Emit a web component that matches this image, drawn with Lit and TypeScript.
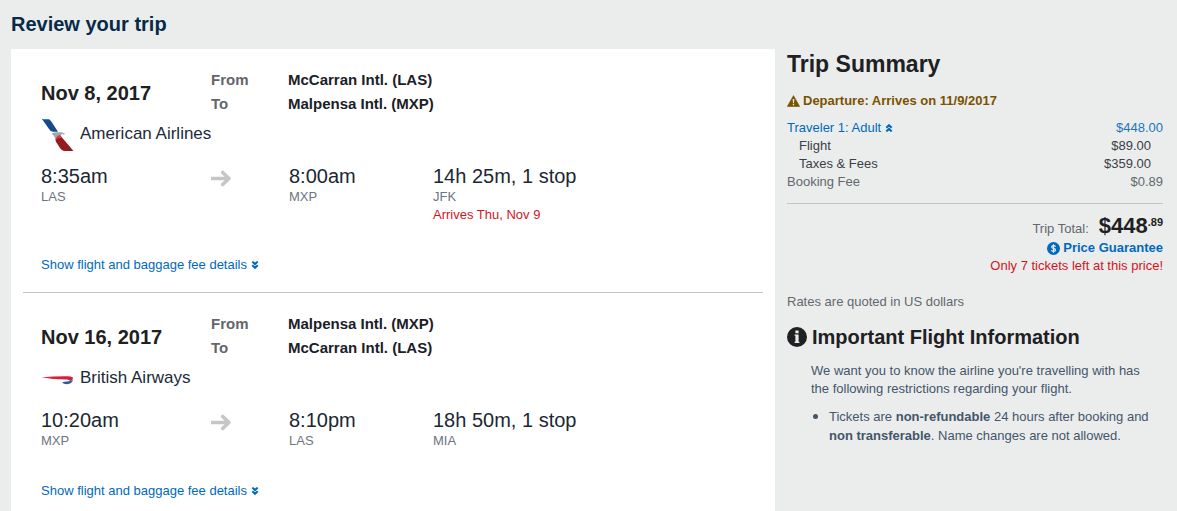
import { LitElement, html, css, svg, nothing } from "lit";
import { customElement, property } from "lit/decorators.js";

interface Leg {
  date: string;
  from: string;
  to: string;
  airline: string;
  logo: "aa" | "ba";
  depart: string;
  departCode: string;
  arrive: string;
  arriveCode: string;
  duration: string;
  via: string;
  note?: string;
}

const LEGS: Leg[] = [
  {
    date: "Nov 8, 2017",
    from: "McCarran Intl. (LAS)",
    to: "Malpensa Intl. (MXP)",
    airline: "American Airlines",
    logo: "aa",
    depart: "8:35am",
    departCode: "LAS",
    arrive: "8:00am",
    arriveCode: "MXP",
    duration: "14h 25m, 1 stop",
    via: "JFK",
    note: "Arrives Thu, Nov 9",
  },
  {
    date: "Nov 16, 2017",
    from: "Malpensa Intl. (MXP)",
    to: "McCarran Intl. (LAS)",
    airline: "British Airways",
    logo: "ba",
    depart: "10:20am",
    departCode: "MXP",
    arrive: "8:10pm",
    arriveCode: "LAS",
    duration: "18h 50m, 1 stop",
    via: "MIA",
  },
];

const LOGOS = {
  aa: svg`
    <path d="M1 0 H6 Q8.500 0 10 2 L17 12.800 H12 Q9.500 12.500 8 10Z" fill="#17498f"/>
    <path d="M1 0 H6 Q8 0 9 1 H1.600Z" fill="#2a86c8"/>
    <path d="M10.500 15 Q12 13.300 15 13.200 H20 Q23.500 13.400 24 15.500 Q20.500 14.800 18.500 16.500 Q15.500 17.500 14.500 20.500 Q13.500 16 10.500 15Z" fill="#9aa9b2"/>
    <path d="M19 16 L21 18.500 L32.500 32 H23 Q20.500 31.500 19 29 L14.800 22.500 Q13.500 18.500 19 16Z" fill="#921c20"/>
    <path d="M19 16 L21 19 Q17 18.500 14.500 21 Q14.500 18 19 16Z" fill="#dc3a2c"/>`,
  ba: svg`
    <path d="M0.500 14.200 Q15 13 27 13.200 Q32.500 13.600 32 15.800 Q31.500 17.600 28.500 18.600 Q30 16.700 25 16.400 Q12 16.400 0.500 14.200Z" fill="#d7213a"/>
    <path d="M32 17 Q31 20.800 26 21.200 Q22.500 21.200 21 19.400 Q23 18.600 26 18.500 Q29.500 18.300 32 17Z" fill="#2b5ba8"/>`,
};

const chevrons = (up: boolean) => html`<svg class="chev" width="8" height="8" viewBox="0 0 8 8" aria-hidden="true">
  ${up
    ? svg`<path d="M1.300 3.700 L4 1.200 L6.700 3.700 M1.300 7.400 L4 4.900 L6.700 7.400"/>`
    : svg`<path d="M1.300 0.600 L4 3.100 L6.700 0.600 M1.300 4.300 L4 6.800 L6.700 4.300"/>`}
</svg>`;

@customElement("trip-leg")
export class TripLeg extends LitElement {
  @property({ attribute: false }) leg!: Leg;

  static styles = css`
    :host { display: block; padding: 19px 18px 18px; }
    .row { display: grid; grid-template-columns: 170px 78px 144px minmax(0, 1fr); }
    .head { grid-template-columns: 170px minmax(0, 1fr); align-items: center; }
    .date { margin: 0; padding-top: 2px; font-size: 20px; line-height: 24px; color: #1e2022; }
    .route { margin: 0; display: grid; grid-template-columns: 77px minmax(0, 1fr); font-size: 15px; line-height: 24px; font-weight: 700; }
    .route dt { color: #63666b; }
    .route dd { margin: 0; color: #1a2028; }
    .airline { display: flex; gap: 6px; margin: 3px 0 13px; font-size: 17px; line-height: 30px; color: #1b2a3a; }
    .time { font-size: 20px; line-height: 24px; color: #1b2733; }
    .code, .note { font-size: 13px; line-height: 18px; color: #6c7583; }
    .note { color: #d5131e; }
    .arrow { display: block; padding-top: 5px; }
    .more { display: block; margin-top: 32px; font-size: 13px; line-height: 18px; }
    a { color: #0069bb; text-decoration: none; }
    .chev { fill: none; stroke: currentColor; stroke-width: 2; }
  `;

  render() {
    const l = this.leg;
    return html`
      <div class="row head">
        <h2 class="date">${l.date}</h2>
        <dl class="route">
          <dt>From</dt><dd>${l.from}</dd>
          <dt>To</dt><dd>${l.to}</dd>
        </dl>
      </div>
      <div class="airline">
        <svg width="33" height="32" viewBox="0 0 33 32" aria-hidden="true">${LOGOS[l.logo]}</svg>
        <span>${l.airline}</span>
      </div>
      <div class="row">
        <div><div class="time">${l.depart}</div><div class="code">${l.departCode}</div></div>
        <svg class="arrow" width="20" height="20" viewBox="0 0 20 20" aria-hidden="true">
          <path d="M0 9.500 H17 M11.700 3.400 L18 9.500 L11.700 15.600" fill="none" stroke="#c6c6c6" stroke-width="3.500" stroke-linecap="round" stroke-linejoin="round"/>
        </svg>
        <div><div class="time">${l.arrive}</div><div class="code">${l.arriveCode}</div></div>
        <div>
          <div class="time">${l.duration}</div>
          <div class="code">${l.via}</div>
          ${l.note ? html`<div class="note">${l.note}</div>` : nothing}
        </div>
      </div>
      <div class="more"><a href="#details">Show flight and baggage fee details ${chevrons(false)}</a></div>
    `;
  }
}

@customElement("trip-summary")
export class TripSummary extends LitElement {
  static styles = css`
    :host { display: block; font-size: 13px; line-height: 18px; color: #63676d; }
    h2 { margin: 0; font-size: 23px; line-height: 30px; color: #1e2022; }
    a { color: #0069bb; text-decoration: none; }
    p { margin: 0; }
    .warn { display: flex; align-items: center; gap: 3px; margin-top: 13px; font-weight: 700; color: #7a5200; }
    .fees { width: 100%; margin-top: 9px; border-collapse: collapse; }
    .fees th, .fees td { padding: 0; font-weight: 400; text-align: left; }
    .fees td { text-align: right; }
    .fees .main td { color: #1a75c0; }
    .fees .sub { color: #3a4048; }
    .fees .sub th { padding-left: 12px; }
    .fees .sub td { padding-right: 12px; }
    .chev { fill: none; stroke: currentColor; stroke-width: 2; }
    .totals { margin-top: 12px; padding-top: 9px; border-top: 1px solid #c3c5c5; text-align: right; }
    .total { display: flex; justify-content: flex-end; align-items: baseline; gap: 10px; }
    .amount { display: flex; align-items: flex-start; font-size: 22px; line-height: 26px; font-weight: 700; color: #1e2022; }
    .cents { font-size: 11px; line-height: 18px; }
    .guarantee { display: flex; justify-content: flex-end; align-items: center; gap: 3px; font-weight: 700; }
    .left { color: #d5131e; }
    .rates { margin-top: 18px; }
    h3 { display: flex; align-items: center; gap: 5px; margin: 14px 0 13px; font-size: 20px; line-height: 24px; color: #1e2022; }
    .info { padding: 0 12px 0 24px; color: #43566a; }
    .info ul { margin: 8px 0 0; padding-left: 18px; line-height: 19px; }
    .info li::marker { font-size: 16px; }
  `;

  render() {
    return html`
      <h2>Trip Summary</h2>
      <p class="warn">
        <svg width="13" height="12" viewBox="0 0 13 12" aria-hidden="true">
          <path d="M6.500 0.600 L12.700 11.500 H0.300Z" fill="#7a5200" stroke="#7a5200" stroke-width="0.600" stroke-linejoin="round"/>
          <path d="M5.700 4 H7.300 L7 8 H6Z M5.800 8.800 H7.200 V10.200 H5.800Z" fill="#ebeded"/>
        </svg>
        <span>Departure: Arrives on 11/9/2017</span>
      </p>
      <table class="fees">
        <tbody>
          <tr class="main"><th scope="row"><a href="#traveler">Traveler 1: Adult ${chevrons(true)}</a></th><td>$448.00</td></tr>
          <tr class="sub"><th scope="row">Flight</th><td>$89.00</td></tr>
          <tr class="sub"><th scope="row">Taxes &amp; Fees</th><td>$359.00</td></tr>
          <tr><th scope="row">Booking Fee</th><td>$0.89</td></tr>
        </tbody>
      </table>
      <div class="totals">
        <div class="total">
          <span>Trip Total:</span>
          <span class="amount">$448<span class="cents">.89</span></span>
        </div>
        <a class="guarantee" href="#guarantee">
          <svg width="13" height="13" viewBox="0 0 13 13" aria-hidden="true">
            <circle cx="6.500" cy="6.500" r="6.500" fill="#0069bb"/>
            <path d="M8.500 4.700 Q8 3.700 6.500 3.700 Q4.600 3.700 4.600 5 Q4.600 6.100 6.500 6.400 Q8.500 6.800 8.500 8 Q8.500 9.300 6.500 9.300 Q4.800 9.300 4.400 8.200 M6.500 2.200 V10.800" fill="none" stroke="#ebeded" stroke-width="1.200"/>
          </svg>
          <span>Price Guarantee</span>
        </a>
        <p class="left">Only 7 tickets left at this price!</p>
      </div>
      <p class="rates">Rates are quoted in US dollars</p>
      <h3>
        <svg width="20" height="20" viewBox="0 0 20 20" aria-hidden="true">
          <circle cx="10" cy="10" r="10" fill="#1e2022"/>
          <path d="M8.400 3.500 H11.600 V6.200 H8.400Z M7.600 7.500 H11.600 V14.800 H12.400 V16 H7.600 V14.800 H8.400 V8.800 H7.600Z" fill="#ebeded"/>
        </svg>
        <span>Important Flight Information</span>
      </h3>
      <div class="info">
        <p>We want you to know the airline you're travelling with has the following restrictions regarding your flight.</p>
        <ul>
          <li>Tickets are <b>non-refundable</b> 24 hours after booking and <b>non transferable</b>. Name changes are not allowed.</li>
        </ul>
      </div>
    `;
  }
}

@customElement("app-root")
export class AppRoot extends LitElement {
  static styles = css`
    :host {
      display: flex;
      flex-direction: column;
      box-sizing: border-box;
      min-height: 100vh;
      padding: 0 14px 0 11px;
      background: #ebeded;
      font-family: "Helvetica Neue", "Liberation Sans", Arial, sans-serif;
    }
    h1 { margin: 0; padding: 12px 0 13px; font-size: 20px; line-height: 24px; color: #062a47; }
    .columns { flex: 1; display: grid; grid-template-columns: minmax(0, 191fr) minmax(0, 94fr); gap: 12px; }
    .card { background: #fff; padding: 0 12px; }
    trip-leg + trip-leg { border-top: 1px solid #c3c5c5; }
  `;

  render() {
    return html`
      <h1>Review your trip</h1>
      <div class="columns">
        <main class="card">${LEGS.map((leg) => html`<trip-leg .leg=${leg}></trip-leg>`)}</main>
        <trip-summary></trip-summary>
      </div>
    `;
  }
}
